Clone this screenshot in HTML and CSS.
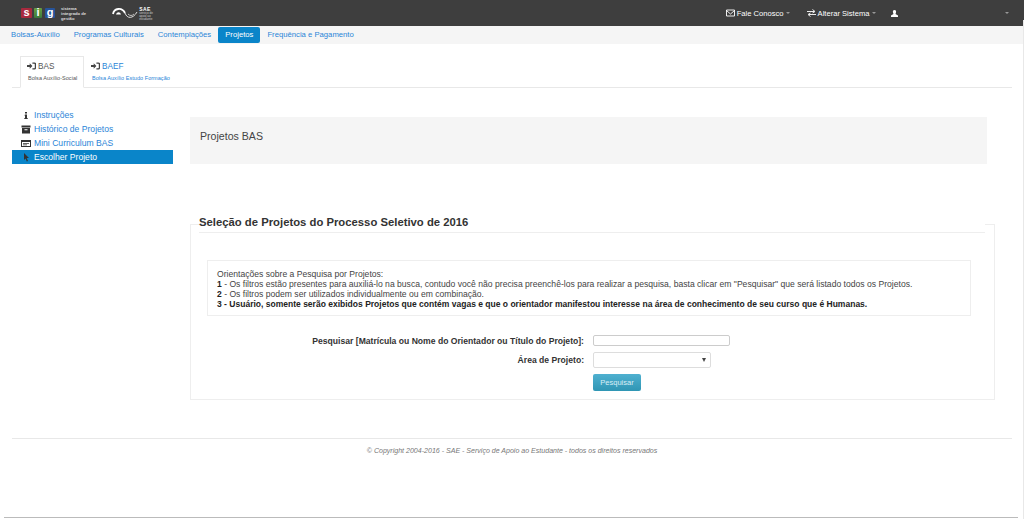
FILE: index.html
```html
<!DOCTYPE html>
<html lang="pt-BR">
<head>
    <meta charset="UTF-8">
    <title>Projetos BAS</title>
    <link rel="stylesheet" href="styles.css">
</head>
<body>

    <header class="topbar">
        <div class="brand">
            <span class="sig"><b class="sig-s">s</b><b class="sig-i">i</b><b class="sig-g">g</b></span>
            <span class="sig-text">sistema<br>integrado de<br>gestão</span>
            <svg class="sae-logo" width="26" height="12" viewBox="0 0 26 12">
                <path d="M1 7 C2 1 10 0 13 6" fill="none" stroke="#fff" stroke-width="1.800"/>
                <path d="M4 7.500 C5 4.500 8 4.500 9 7.500 Z" fill="#fff"/>
                <path d="M13 6 C15 12 21 12 25 5" fill="none" stroke="#ddd" stroke-width="1"/>
                <path d="M16 7 C18 9 20 9 22 7" fill="none" stroke="#ddd" stroke-width=".8"/>
            </svg>
            <span class="sae-text"><b>SAE</b><small>serviço de<br>apoio ao<br>estudante</small></span>
        </div>
        <nav class="topmenu">
            <a class="fale">
                <svg width="9" height="8" viewBox="0 0 9 8"><path d="M.5 1h8v6h-8zM.5 1.500 4.500 5l4-3.500" fill="none" stroke="#fff" stroke-width=".9"/></svg>
                Fale Conosco <i class="caret"></i>
            </a>
            <a class="alterar">
                <svg width="9" height="8" viewBox="0 0 9 8"><path d="M0 2.500h7M5.500 .5 8 2.500 5.500 4M9 5.500H2M3.500 4 1 5.500 3.500 7.500" fill="none" stroke="#fff" stroke-width=".9"/></svg>
                Alterar Sistema <i class="caret"></i>
            </a>
            <a class="user">
                <svg width="7" height="7" viewBox="0 0 7 7"><path d="M3.500 0C5 0 5.300 1.200 5 2.500 4.800 3.300 4.500 3.700 4.500 4L7 5.500V7H0V5.500L2.500 4C2.500 3.700 2.200 3.300 2 2.500 1.700 1.200 2 0 3.500 0Z" fill="#fff"/></svg>
            </a>
            <i class="caret"></i>
        </nav>
    </header>

    <nav class="subnav">
        <a>Bolsas-Auxílio</a>
        <a>Programas Culturais</a>
        <a>Contemplações</a>
        <a class="active">Projetos</a>
        <a>Frequência e Pagamento</a>
    </nav>

    <div class="tabs">
        <a class="tab active">
            <span class="tab-title"><svg class="login-icon" width="9" height="8" viewBox="0 0 10 8"><path d="M0 2.800h3V1l3 3-3 3V5.200H0Z" fill="#444"/><path d="M6 .8h2.200A1.200 1.200 0 0 1 9.400 2v4a1.200 1.200 0 0 1-1.200 1.200H6" fill="none" stroke="#444" stroke-width="1.500"/></svg>BAS</span>
            <small>Bolsa Auxílio-Social</small>
        </a>
        <a class="tab">
            <span class="tab-title"><svg class="login-icon" width="9" height="8" viewBox="0 0 10 8"><path d="M0 2.800h3V1l3 3-3 3V5.200H0Z" fill="#444"/><path d="M6 .8h2.200A1.200 1.200 0 0 1 9.400 2v4a1.200 1.200 0 0 1-1.200 1.200H6" fill="none" stroke="#444" stroke-width="1.500"/></svg>BAEF</span>
            <small>Bolsa Auxílio Estudo Formação</small>
        </a>
    </div>

    <div class="main">
        <aside class="sidebar">
            <a>
                <svg width="10" height="9" viewBox="0 0 10 9"><path d="M4 1h2v1.500H4zM4 3.500h2V7h.7v1H3.300V7H4V4.500h-.7z" fill="#333"/></svg>
                Instruções
            </a>
            <a>
                <svg width="10" height="9" viewBox="0 0 10 9"><path d="M.5 .5h9v2h-9zM1 3h8v5.500H1zM3.500 4.200v1h3v-1z" fill="#333" fill-rule="evenodd"/></svg>
                Histórico de Projetos
            </a>
            <a>
                <svg width="10" height="9" viewBox="0 0 10 9"><path d="M0 1h10v7H0zM1 3v4h8V3zM2 4h6v.8H2zM2 5.500h4v.8H2z" fill="#333" fill-rule="evenodd"/></svg>
                Mini Curriculum BAS
            </a>
            <a class="active">
                <svg width="10" height="9" viewBox="0 0 10 9"><path d="M3 0 8 5H5.700L7 8 5.800 8.600 4.500 5.600 3 7Z" fill="#333"/></svg>
                Escolher Projeto
            </a>
        </aside>

        <section class="content">
            <div class="hero">Projetos BAS</div>

            <fieldset class="selecao">
                <legend>Seleção de Projetos do Processo Seletivo de 2016</legend>

                <div class="orientacoes">
                    Orientações sobre a Pesquisa por Projetos:<br>
                    <b>1</b> - Os filtros estão presentes para auxiliá-lo na busca, contudo você não precisa preenchê-los para realizar a pesquisa, basta clicar em "Pesquisar" que será listado todos os Projetos.<br>
                    <b>2</b> - Os filtros podem ser utilizados individualmente ou em combinação.<br>
                    <b>3 - Usuário, somente serão exibidos Projetos que contém vagas e que o orientador manifestou interesse na área de conhecimento de seu curso que é Humanas.</b>
                </div>

                <form class="busca">
                    <label for="termo">Pesquisar [Matrícula ou Nome do Orientador ou Título do Projeto]:</label>
                    <input id="termo" type="text">
                    <label for="area">Área de Projeto:</label>
                    <span class="select-wrap"><select id="area"><option></option></select></span>
                    <button type="button">Pesquisar</button>
                </form>
            </fieldset>
        </section>
    </div>

    <footer class="rodape">
        © Copyright 2004-2016 - SAE - Serviço de Apoio ao Estudante - todos os direitos reservados
    </footer>

    <div class="edge-bottom"></div>
    <div class="edge-right"></div>

</body>
</html>
```

FILE: styles.css
```css
body {
    margin: 0;
    height: 519px;
    overflow: hidden;
    position: relative;
    font-family: "Liberation Sans", Arial, sans-serif;
    font-size: 8.6px;
    color: #444;
    background-color: white;
}
a {
    color: #2a85d8;
    text-decoration: none;
}

/* top bar */
.topbar {
    height: 26px;
    background-color: #3e3e3e;
    display: flex;
    align-items: center;
    justify-content: space-between;
    padding: 0 15px 0 21px;
    font-size: 7.6px;
}
.brand {
    display: flex;
    align-items: center;
}
.sig {
    display: flex;
    height: 10px;
    font-size: 11px;
    line-height: 9px;
    color: white;
    text-align: center;
}
.sig b {
    display: block;
    height: 10px;
    border-radius: 1px;
}
.sig-s {
    width: 11px;
    background-color: #a82a3e;
}
.sig-i {
    width: 8px;
    margin: 0 3px 0 2px;
    background: linear-gradient(#6aa040, #3a7a3c);
}
.sig-g {
    width: 10px;
    background-color: #27549a;
}
.sig-text {
    margin-left: 6px;
    font-size: 4.2px;
    line-height: 5px;
    font-weight: bold;
    color: #ddd;
}
.sae-logo {
    margin-left: 26px;
}
.sae-text {
    margin-left: 1px;
    color: #ccc;
    line-height: 3px;
}
.sae-text b {
    display: block;
    font-size: 5px;
    line-height: 6px;
    color: white;
    letter-spacing: .5px;
}
.sae-text small {
    display: block;
    font-size: 3px;
}
.topmenu {
    display: flex;
    align-items: center;
    height: 100%;
}
.topmenu a {
    color: white;
    display: flex;
    align-items: center;
    gap: 1.500px;
}
.fale {
    margin-right: 17px;
}
.alterar {
    margin-right: 15px;
}
.user {
    margin-right: 106px;
}
.caret {
    display: inline-block;
    margin-left: 1px;
    border-top: 2px solid #999;
    border-left: 2px solid transparent;
    border-right: 2px solid transparent;
}

/* sub menu */
.subnav {
    height: 18px;
    background-color: #f5f5f5;
    display: flex;
    align-items: center;
    padding-left: 4px;
    font-size: 7.7px;
}
.subnav a {
    padding: 0 7px;
    line-height: 16px;
    border-radius: 2px;
}
.subnav a.active {
    background-color: #0a85c9;
    color: white;
}

/* tabs */
.tabs {
    display: flex;
    height: 31px;
    margin: 12px 12px 0 12px;
    padding-left: 8px;
    border-bottom: 1px solid #e8e8e8;
}
.tab {
    display: block;
    height: 31px;
    padding: 4px 7px 0 7px;
    box-sizing: border-box;
    border: 1px solid transparent;
}
.tab.active {
    height: 32px;
    width: 64px;
    background-color: white;
    border-color: #e8e8e8;
    border-bottom-color: white;
    color: #555;
}
.tab-title {
    display: block;
    font-size: 8.2px;
    line-height: 11px;
}
.login-icon {
    margin: 0 2px 0 -1px;
    vertical-align: -1px;
}
.tab small {
    display: block;
    margin-top: 3px;
    font-size: 5.500px;
    letter-spacing: .05px;
    white-space: nowrap;
}

/* main */
.main {
    display: flex;
}
.sidebar {
    width: 161px;
    margin: 20px 17px 0 12px;
}
.sidebar a {
    display: flex;
    align-items: center;
    gap: 3px;
    height: 14px;
    padding-left: 9px;
}
.sidebar a.active {
    background-color: #0a85c9;
    color: white;
}
.content {
    flex: 1;
}
.hero {
    width: 787px;
    height: 47px;
    margin-top: 29px;
    padding-left: 10px;
    background-color: #f5f5f5;
    font-size: 10.600px;
    line-height: 39px;
    color: #444;
}
.selecao {
    box-sizing: border-box;
    min-width: 0;
    width: 805px;
    height: 185px;
    margin: 51px 0 0 0;
    padding: 0 16px;
    border: 1px solid #eee;
}
.selecao legend {
    box-sizing: border-box;
    width: 786px;
    margin-left: -8px;
    padding: 0 0 3px 0;
    border-bottom: 1px solid #eee;
    font-size: 11.300px;
    font-weight: bold;
    line-height: 14px;
    color: #333;
}
.orientacoes {
    box-sizing: border-box;
    width: 764px;
    height: 56px;
    margin-top: 27px;
    padding: 8px 9px;
    border: 1px solid #eee;
    line-height: 10px;
}
.orientacoes b {
    font-size: 8.53px;
    color: #222;
}
.busca {
    display: grid;
    grid-template-columns: 377px 137px;
    column-gap: 9px;
    align-items: center;
    row-gap: 6px;
    margin-top: 19px;
}
.busca label {
    text-align: right;
    font-weight: bold;
    white-space: nowrap;
    color: #333;
}
.busca input {
    box-sizing: border-box;
    width: 137px;
    height: 11px;
    padding: 0;
    border: 1px solid #ccc;
    border-radius: 2px;
    background-color: white;
}
.select-wrap {
    position: relative;
    display: block;
    width: 118px;
    height: 16px;
}
.select-wrap::after {
    content: "";
    position: absolute;
    right: 5px;
    top: 6px;
    border-top: 4px solid #444;
    border-left: 2px solid transparent;
    border-right: 2px solid transparent;
}
.busca select {
    display: block;
    box-sizing: border-box;
    appearance: none;
    width: 118px;
    height: 16px;
    padding: 0;
    border: 1px solid #ddd;
    border-radius: 2px;
    background-color: white;
}
.busca button {
    grid-column: 2;
    width: 48px;
    height: 17px;
    padding: 0;
    border: none;
    border-radius: 2px;
    background: linear-gradient(#4fb0d0, #2f96b4);
    color: #d8eef5;
    font-family: inherit;
    font-size: 7.500px;
}

/* footer */
.rodape {
    margin: 38px 12px 0 12px;
    padding-top: 8px;
    border-top: 1px solid #e8e8e8;
    text-align: center;
    font-size: 7.060px;
    font-style: italic;
    color: #777;
}

/* window edges in the capture */
.edge-bottom {
    position: absolute;
    left: 4px;
    right: 6px;
    bottom: 1px;
    height: 1px;
    background-color: #bbb;
}
.edge-right {
    position: absolute;
    right: 0;
    top: 20px;
    bottom: 0;
    width: 1px;
    background-color: #e8e8e8;
}
```
